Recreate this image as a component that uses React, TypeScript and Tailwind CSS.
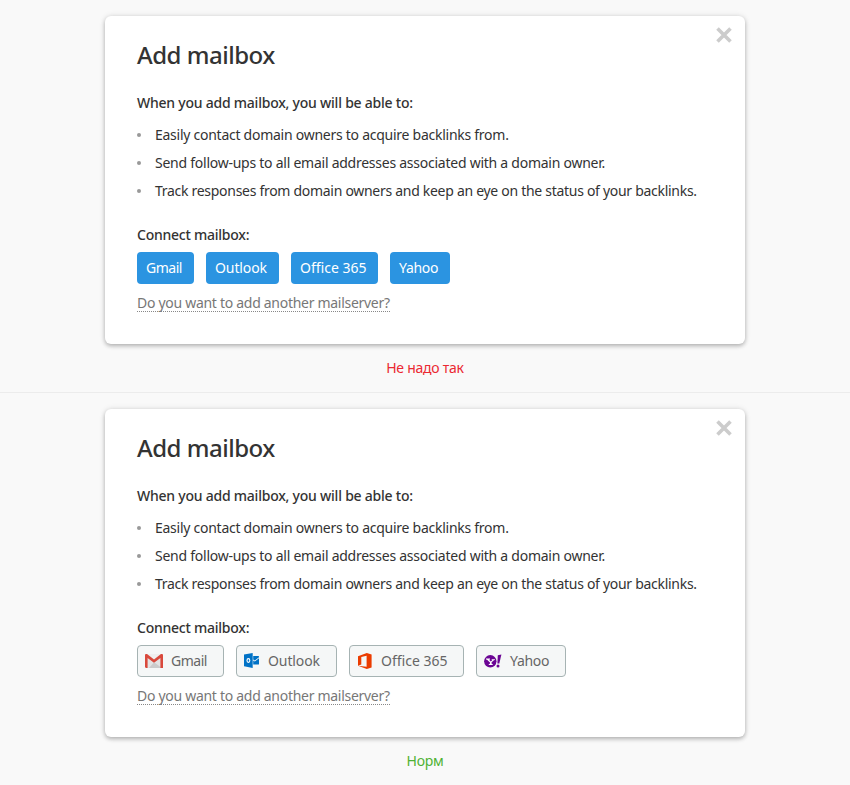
import type { ReactNode } from "react";

type Provider = { name: string; width: string; tracking: string; icon?: ReactNode };

function GmailIcon() {
  return (
    <svg className="mr-2 h-[14px] w-[18px] shrink-0" viewBox="0 0 18 14">
      <path d="M1 0h16v14H1z" fill="#e3e3e3" />
      <path d="M9 8.3 17 14H4z" fill="#cbcbcb" />
      <path d="M2 0h14L9 5.5z" fill="#efefef" />
      <path d="M0 1.2C0 .5.5 0 1.2 0h.8L9 5.4 16 0h.8c.7 0 1.2.5 1.2 1.2V14h-2.6V3.9L9 8.8 2.6 3.9V14H1.2C.5 14 0 13.5 0 12.8z" fill="#d9493c" />
    </svg>
  );
}

function OutlookIcon() {
  return (
    <svg className="mb-px mr-[9px] h-[15px] w-[15px] shrink-0" viewBox="0 0 15 15">
      <path d="M0 1.6 8.7 0v15L0 13.3z" fill="#0072c6" />
      <path d="M9.2 3H14.4c.3 0 .6.3.6.6v.6L10.8 7.4 9.2 6.4z" fill="#0072c6" />
      <path d="M9.2 7.4l1.6 1L15 5.2v5.7c0 .4-.2.6-.6.6H9.2z" fill="#0072c6" />
      <ellipse cx="4.4" cy="7.5" rx="1.4" ry="1.9" fill="none" stroke="#fff" strokeWidth="1.1" />
    </svg>
  );
}

function OfficeIcon() {
  return (
    <svg className="ml-px mr-[9px] h-[16px] w-[14px] shrink-0" viewBox="0 0 14 16">
      <path d="M0 3.2 8.8 0 13.6 1.4v13.2L8.8 16 0 12.8l8.6 1V2.7L3.3 3.9v7.6L0 12.8z" fill="#eb3c00" />
    </svg>
  );
}

function YahooIcon() {
  return (
    <svg className="mr-2 h-[14px] w-[18px] shrink-0" viewBox="0 0 18 14">
      <circle cx="6.3" cy="7.3" r="6.2" fill="#6b0594" />
      <path d="M2 4.6h4v.9l-.9.2 1.7 1.8 1.5-1.2-.6-.2v-.9h3.2v.9l-1 .2-2.3 2v1.5l1.1.2v.9H4.8V10l1.2-.2V8.5L3.1 5.7 2 5.5z" fill="#fff" />
      <path d="M13.8 1.2 17.4.6 15.3 9.4h-1.9z" fill="#6b0594" />
      <circle cx="14" cy="11.9" r="1.5" fill="#6b0594" />
    </svg>
  );
}

const providers: Provider[] = [
  { name: "Gmail", width: "w-[57px]", tracking: "tracking-[-0.5px]" },
  { name: "Outlook", width: "w-[73px]", tracking: "tracking-[-0.1px]" },
  { name: "Office 365", width: "w-[87px]", tracking: "tracking-normal" },
  { name: "Yahoo", width: "w-[60px]", tracking: "tracking-[-0.3px]" },
];

const iconProviders: Provider[] = [
  { name: "Gmail", width: "w-[87px]", icon: <GmailIcon />, tracking: "tracking-[-0.5px]" },
  { name: "Outlook", width: "w-[101px]", icon: <OutlookIcon />, tracking: "tracking-[-0.1px]" },
  { name: "Office 365", width: "w-[115px]", icon: <OfficeIcon />, tracking: "tracking-normal" },
  { name: "Yahoo", width: "w-[90px]", icon: <YahooIcon />, tracking: "tracking-[-0.3px]" },
];

const benefits = [
  { text: "Easily contact domain owners to acquire backlinks from.", tracking: "tracking-[-0.26px]" },
  { text: "Send follow-ups to all email addresses associated with a domain owner.", tracking: "tracking-[-0.25px]" },
  { text: "Track responses from domain owners and keep an eye on the status of your backlinks.", tracking: "tracking-[-0.29px]" },
];

function MailboxCard({ withIcons = false }: { withIcons?: boolean }) {
  const list = withIcons ? iconProviders : providers;
  return (
    <div className="flex h-[328px] w-[640px] items-start justify-between rounded-[6px] bg-white pl-8 pr-[13px] shadow-[0_2px_4px_rgba(0,0,0,0.25),0_0_6px_rgba(0,0,0,0.1)]">
      <div className="flex w-[570px] flex-col items-start whitespace-nowrap pt-[23px]">
        <h1 className="text-[24px] font-medium leading-8 tracking-[-0.5px]">Add mailbox</h1>
        <p className="mt-[22px] text-[14px] font-medium leading-5 tracking-[-0.23px]">When you add mailbox, you will be able to:</p>
        <ul className="mt-2 text-[14px] leading-7">
          {benefits.map((b) => (
            <li key={b.text} className="flex items-center">
              <span className="mr-[14px] size-1 rounded-full bg-[#999]" />
              <span className={b.tracking}>{b.text}</span>
            </li>
          ))}
        </ul>
        <p className="mt-5 text-[14px] font-medium leading-5 tracking-[-0.24px]">Connect mailbox:</p>
        <div className="mt-[7px] flex gap-3 text-[14px]">
          {list.map((p) =>
            withIcons ? (
              <button key={p.name} className={`flex h-8 items-center rounded-[4px] border border-[#a6b3b3] bg-[#f5f7f7] pl-[7px] text-[#666] ${p.width}`}>
                {p.icon}
                <span className={`pb-0.5 ${p.tracking}`}>{p.name}</span>
              </button>
            ) : (
              <button key={p.name} className={`flex h-8 items-center rounded-[4px] bg-[#2b94e1] pl-[9px] text-white ${p.width}`}>
                <span className={`pb-0.5 ${p.tracking}`}>{p.name}</span>
              </button>
            ),
          )}
        </div>
        <a className="mt-[10px] h-[18px] border-b border-dotted border-[#888] text-[14px] leading-[18px] tracking-[-0.29px] text-[#777]">Do you want to add another mailserver?</a>
      </div>
      <svg className="mt-[11px] h-4 w-4 shrink-0" viewBox="0 0 16 16">
        <path d="M1.5 1.5l13 13M14.5 1.5l-13 13" stroke="#ccc" strokeWidth="3.6" />
      </svg>
    </div>
  );
}

export default function App() {
  return (
    <main className="h-[785px] w-[850px] overflow-hidden bg-[#f9f9f9] font-['Noto_Sans','Open_Sans',sans-serif] text-[#333]">
      <section className="flex h-[393px] flex-col items-center border-b border-[#ececec] pt-4">
        <MailboxCard />
        <p className="mt-[14px] text-[14px] leading-5 tracking-[-0.25px] text-[#eb2832]">Не надо так</p>
      </section>
      <section className="flex flex-col items-center pt-4">
        <MailboxCard withIcons />
        <p className="mt-[14px] text-[14px] leading-5 tracking-[-0.3px] text-[#4fb234]">Норм</p>
      </section>
    </main>
  );
}
